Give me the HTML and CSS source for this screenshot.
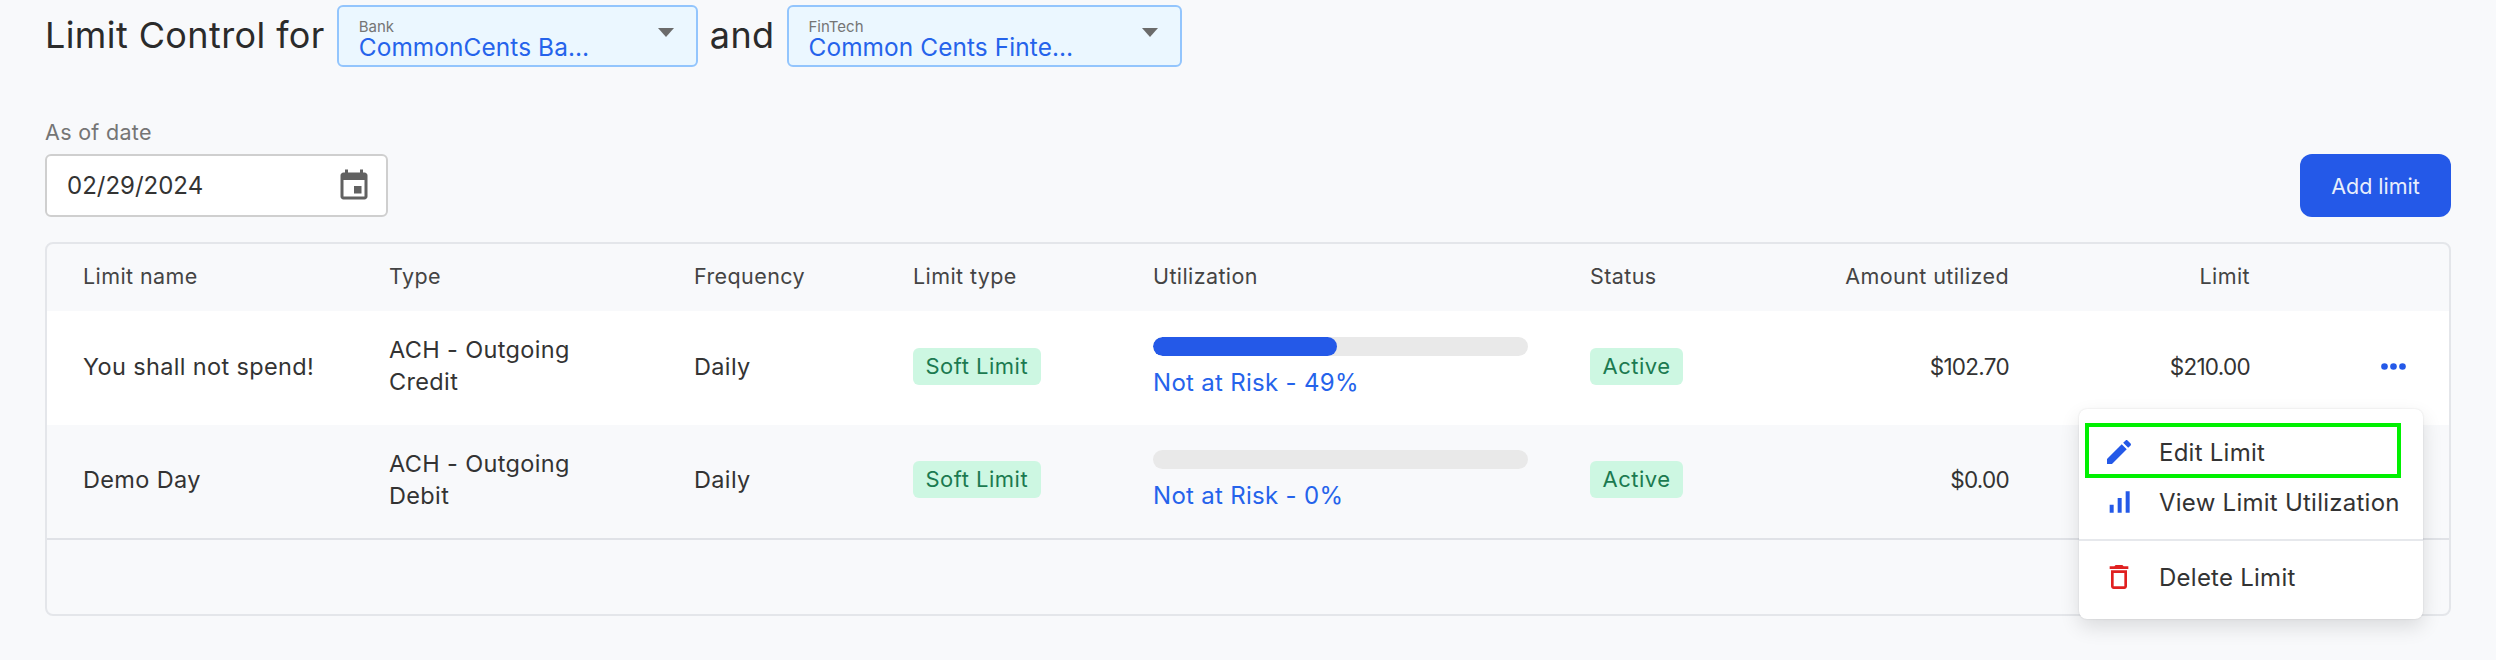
FILE: index.html
```html
<!DOCTYPE html>
<html lang="en">
<head>
<meta charset="utf-8">
<title>Limit Control</title>
<link rel="stylesheet" href="styles.css">
</head>
<body>
<main class="page">
  <header class="title-row">
    <h1 class="title">Limit Control for</h1>
    <div class="select select-bank">
      <div class="select-text"><span class="select-label">Bank</span><span class="select-value">CommonCents Ba…</span></div>
      <span class="caret"></span>
    </div>
    <span class="title">and</span>
    <div class="select select-fintech">
      <div class="select-text"><span class="select-label">FinTech</span><span class="select-value">Common Cents Finte…</span></div>
      <span class="caret"></span>
    </div>
  </header>

  <section class="filters">
    <div class="date-field">
      <label class="date-label">As of date</label>
      <div class="date-input">
        <span>02/29/2024</span>
        <svg class="cal" viewBox="0 0 24 24"><path d="M17 12h-5v5h5v-5zM16 1v2H8V1H6v2H5c-1.11 0-1.99.9-1.99 2L3 19c0 1.1.89 2 2 2h14c1.1 0 2-.9 2-2V5c0-1.1-.9-2-2-2h-1V1h-2zm3 18H5V8h14v11z"/></svg>
      </div>
    </div>
    <button class="add-btn">Add limit</button>
  </section>

  <section class="card">
    <div class="row head">
      <div>Limit name</div><div>Type</div><div>Frequency</div><div>Limit type</div><div>Utilization</div><div>Status</div><div class="num">Amount utilized</div><div class="num">Limit</div><div></div>
    </div>
    <div class="row body white">
      <div>You shall not spend!</div>
      <div class="type">ACH - Outgoing<br>Credit</div>
      <div>Daily</div>
      <div><span class="badge">Soft Limit</span></div>
      <div class="util"><div class="track"><div class="fill" style="width:49%"></div></div><div class="risk">Not at Risk - 49%</div></div>
      <div><span class="badge">Active</span></div>
      <div class="num">$102.70</div>
      <div class="num">$210.00</div>
      <div class="actions"><svg class="dots" viewBox="0 0 25 7"><circle cx="3.5" cy="3.5" r="3.3"/><circle cx="12.5" cy="3.5" r="3.3"/><circle cx="21.5" cy="3.5" r="3.3"/></svg></div>
    </div>
    <div class="row body">
      <div>Demo Day</div>
      <div class="type">ACH - Outgoing<br>Debit</div>
      <div>Daily</div>
      <div><span class="badge">Soft Limit</span></div>
      <div class="util"><div class="track"></div><div class="risk">Not at Risk - 0%</div></div>
      <div><span class="badge">Active</span></div>
      <div class="num">$0.00</div>
      <div class="num"></div>
      <div></div>
    </div>
    <div class="card-foot"></div>

    <div class="menu">
      <div class="item item-edit">
        <svg class="icon blue" viewBox="0 0 24 24"><path d="M3 17.25V21h3.75L17.81 9.94l-3.75-3.75L3 17.25zM20.71 7.04c.39-.39.39-1.02 0-1.41l-2.34-2.34c-.39-.39-1.02-.39-1.41 0l-1.83 1.83 3.75 3.75 1.83-1.83z"/></svg>
        <span>Edit Limit</span>
      </div>
      <div class="item item-view">
        <svg class="icon blue" viewBox="0 0 24 24"><path d="M17 4h3v16h-3V4zM5 14h3v6H5v-6zm6-5h3v11h-3V9z"/></svg>
        <span>View Limit Utilization</span>
      </div>
      <div class="item item-delete">
        <svg class="icon red" viewBox="0 0 24 24"><path d="M6 19c0 1.1.9 2 2 2h8c1.1 0 2-.9 2-2V7H6v12zM8 9h8v10H8V9zm7.5-5l-1-1h-5l-1 1H5v2h14V4z"/></svg>
        <span>Delete Limit</span>
      </div>
    </div>
  </section>
</main>
</body>
</html>
```
FILE: styles.css
```css
* { box-sizing: border-box; }
html, body { margin: 0; background: #fff; }
body { font-family: "Inter", "Liberation Sans", sans-serif; color: #333; }
.page { height: 660px; background: #f8f9fb; padding: 5px 45px 0; }

.title-row { display: flex; align-items: center; gap: 12px; height: 62px; }
.title { margin: 0 0 2px; font-size: 36px; font-weight: 400; color: #2b2b2b; letter-spacing: 0.4px; line-height: 40px; }
.select { height: 62px; background: #ebf7ff; border: 2px solid #93c5fd; border-radius: 6px; display: flex; align-items: center; justify-content: space-between; padding: 0 22px 0 20px; }
.select-bank { width: 361px; }
.select-fintech { width: 395px; }
.select-text { display: flex; flex-direction: column; padding-top: 7px; }
.select-label { font-size: 15px; line-height: 14px; color: #757575; }
.select-value { font-size: 24.4px; line-height: 26px; color: #2563eb; letter-spacing: 0.1px; }
.caret { width: 0; height: 0; border-left: 8px solid transparent; border-right: 8px solid transparent; border-top: 9px solid #6b6b6b; margin-top: -7px; }

.filters { display: flex; justify-content: space-between; align-items: flex-end; margin-top: 53px; }
.date-label { display: block; font-size: 21.5px; line-height: 24px; letter-spacing: 0.3px; color: #757575; margin-bottom: 10px; }
.date-input { width: 343px; height: 63px; background: #fff; border: 2px solid #cfcfcf; border-radius: 6px; display: flex; align-items: center; justify-content: space-between; padding: 0 14px 0 20px; font-size: 24px; color: #333; }
.cal { width: 36px; height: 36px; fill: #616161; }
.add-btn { width: 151px; height: 63px; border: 0; border-radius: 12px; background: #2459e8; color: #e8eefc; font: inherit; font-size: 21.5px; }

.card { position: relative; margin-top: 25px; height: 374px; border: 2px solid #e4e6ea; border-radius: 8px; }
.row { display: grid; grid-template-columns: 306px 305px 219px 240px 437px 209px 210px 241px 1fr; padding-left: 36px; align-items: center; }
.head { height: 67px; font-size: 21.5px; letter-spacing: 0.4px; color: #444; border-radius: 8px 8px 0 0; padding-bottom: 4px; }
.body { height: 113.5px; font-size: 23.5px; letter-spacing: 0.35px; color: #333; padding-bottom: 3px; }
.body .num { font-size: 22.5px; letter-spacing: -0.7px; }
.white { background: #fff; }
.type { line-height: 32px; }
.num { text-align: right; }
.badge { display: inline-block; height: 37px; line-height: 37px; padding: 0 12.5px; background: #cdf7e2; color: #1b7a50; border-radius: 6px; font-size: 22px; letter-spacing: 0.5px; }
.track { width: 375px; height: 19px; border-radius: 10px; background: #e9e9e9; overflow: hidden; }
.fill { height: 100%; background: #2459e8; border-radius: 10px; }
.risk { color: #2563eb; margin-top: 11px; line-height: 32px; font-size: 24px; letter-spacing: 0.3px; }
.util { padding-top: 3px; }
.actions { display: flex; justify-content: flex-end; padding-right: 43px; }
.dots { width: 25px; height: 7px; fill: #2459e8; }
.card-foot { height: 79px; border-top: 2px solid #e0e2e7; }

.menu { position: absolute; left: 2032px; top: 165px; width: 344px; height: 210px; background: #fff; border-radius: 8px; box-shadow: 0 0 2px rgba(0,0,0,.12), 0 8px 20px rgba(0,0,0,.12); padding-top: 14px; font-size: 24px; letter-spacing: 0.25px; color: #333; }
.item { display: flex; align-items: center; gap: 24px; padding-left: 24px; }
.item-edit { height: 55px; margin: 0 22px 0 6px; padding-left: 18px; padding-top: 3px; outline: 4px solid #00f000; outline-offset: -4px; }
.item-view { height: 49px; padding-bottom: 1px; }
.item-delete { height: 74px; margin-top: 12px; border-top: 2px solid #e6e8ec; }
.icon { width: 32px; height: 32px; flex: none; }
.blue { fill: #2459e8; }
.red { fill: #e02020; }
```
